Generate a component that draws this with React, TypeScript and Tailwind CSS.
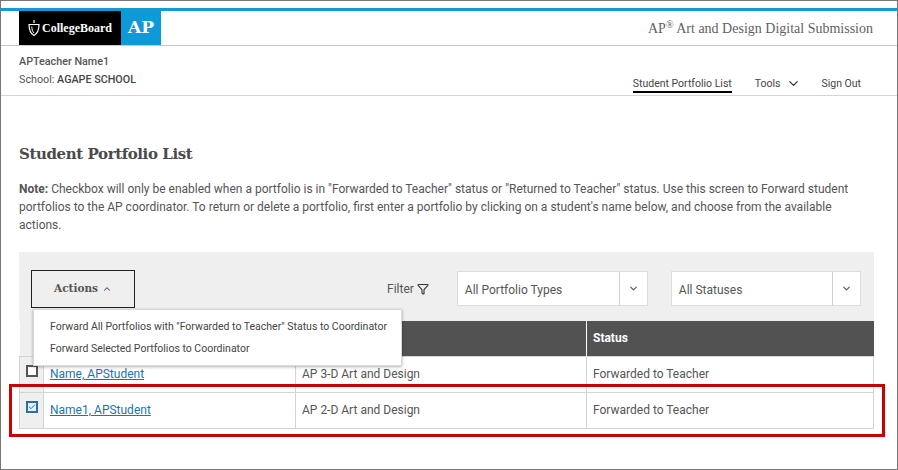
import React from 'react';
import { ChevronDown, ChevronUp, Check, Funnel } from 'lucide-react';

const slab = "font-['DejaVu_Serif','Liberation_Serif',serif]";

const rows = [
  { name: 'Name, APStudent', type: 'AP 3-D Art and Design', checked: false },
  { name: 'Name1, APStudent', type: 'AP 2-D Art and Design', checked: true },
];

function Select({ label, width }: { label: string; width: string }) {
  return (
    <div className={`flex h-[35px] ${width} border border-[#dcdcdc] bg-white text-[12px] text-[#555]`}>
      <div className="flex flex-1 items-center pl-[7px] pt-[3px]">{label}</div>
      <div className="flex w-7 items-center justify-center border-l border-[#d0d0d0]">
        <ChevronDown size={11} strokeWidth={2.5} className="text-[#555]" />
      </div>
    </div>
  );
}

export default function App() {
  return (
    <div className="relative h-[470px] w-[898px] overflow-hidden border border-[#777] bg-white pt-[7px] font-['Roboto',sans-serif] text-[#555]">
      <div className="h-[3px] bg-[#119ad4]" />

      <header className="flex h-[35px] items-start justify-between border-b border-[#c8c8c8] pl-[18px] pr-6">
        <div className="flex h-[34px]">
          <div className="flex w-[102px] items-center gap-[2px] bg-black pl-[9px] text-white">
            <svg width="12" height="16" viewBox="0 0 12 16" fill="none" stroke="white" strokeWidth="1.2">
              <path d="M6 0v3M1 4.500h10C11 10 9.500 13.500 6 15.500 2.500 13.500 1 10 1 4.500z" />
              <path d="M3.800 6.500c0 3 .8 5 2.200 6.500" strokeWidth="1" />
            </svg>
            <span className="font-['Liberation_Serif',serif] text-[12px] font-bold">CollegeBoard</span>
          </div>
          <div className={`flex w-10 items-center justify-center bg-[#0e9ad9] text-[17px] font-bold text-white ${slab}`}>AP</div>
        </div>
        <div className="mt-[7px] font-['Liberation_Serif',serif] text-[14px] text-[#5f5f5f]">
          AP<sup className="text-[10px]">®</sup> Art and Design Digital Submission
        </div>
      </header>

      <div className="flex h-[50px] justify-between border-b border-[#d5d5d5] pl-[18px] pr-[36px]">
        <div className="pt-[7px] text-[10.750px] leading-[18px]">
          <div className="font-medium text-[#555]">APTeacher Name1</div>
          <div>School: <span className="font-medium text-[#444]">AGAPE SCHOOL</span></div>
        </div>
        <nav className="flex items-start pt-[30px] text-[10.500px] text-[#444]">
          <span className="mr-[23px] h-[17px] border-b-2 border-black">Student Portfolio List</span>
          <span className="mr-[6px]">Tools</span>
          <ChevronDown size={15} className="mr-[20px] text-[#333]" />
          <span>Sign Out</span>
        </nav>
      </div>

      <main className="px-[18px]">
        <h1 className={`mt-[48px] text-[15px] font-bold leading-5 tracking-[-0.4px] text-[#4a4a4a] ${slab}`}>Student Portfolio List</h1>
        <p className="mt-[16px] w-[845px] text-[12px] leading-[18px] text-[#555]">
          <strong className="font-bold">Note:</strong> Checkbox will only be enabled when a portfolio is in "Forwarded to Teacher" status or "Returned to Teacher" status. Use this screen to Forward student portfolios to the AP coordinator. To return or delete a portfolio, first enter a portfolio by clicking on a student's name below, and choose from the available actions.
        </p>

        <div className="mt-[18px] flex h-[69px] w-[855px] items-start bg-[#efefef] pl-[12px] pt-[18px]">
          <button className={`flex h-[38px] w-[104px] items-center justify-center gap-1 border border-[#222] text-[10.500px] font-bold text-[#555] ${slab}`}>
            Actions <ChevronUp size={10} strokeWidth={2.5} />
          </button>
          <div className="ml-[252px] mt-[10px] flex items-center gap-[3px] text-[12px]">
            Filter <Funnel size={12} strokeWidth={2.2} className="text-[#333]" />
          </div>
          <div className="ml-[28px] flex gap-[23px] pt-px">
            <Select label="All Portfolio Types" width="w-[191px]" />
            <Select label="All Statuses" width="w-[190px]" />
          </div>
        </div>

        <table className="w-[855px] table-fixed border-collapse text-[12px]">
          <colgroup>
            <col className="w-[24px]" />
            <col className="w-[252px]" />
            <col className="w-[291px]" />
            <col />
          </colgroup>
          <thead>
            <tr className="h-[35px] bg-[#525252] text-left font-bold text-white">
              <th className="bg-[#efefef]" />
              <th />
              <th className="border-r border-white" />
              <th className="pl-[6px] font-bold">Status</th>
            </tr>
          </thead>
          <tbody>
            {rows.map(row => (
              <tr key={row.name} className="h-[36px]">
                <td className="border border-[#d4d4d4] bg-[#efefef] align-top">
                  <div className="ml-[6px] mt-[8px] flex h-[12px] w-[12px] items-center justify-center border-2 border-[#555] bg-white data-[on=true]:border-[#2e6da4] data-[on=true]:bg-[#e6f0f8]" data-on={row.checked}>
                    {row.checked && <Check size={10} strokeWidth={3} className="text-[#1c6aa8]" />}
                  </div>
                </td>
                <td className="border border-[#d4d4d4] pl-[6px]">
                  <a href="#" className="text-[#1b75ab] underline">{row.name}</a>
                </td>
                <td className="border border-[#d4d4d4] pl-[6px]">{row.type}</td>
                <td className="border border-[#d4d4d4] pl-[6px]">Forwarded to Teacher</td>
              </tr>
            ))}
          </tbody>
        </table>
      </main>

      {/* open Actions menu */}
      <div className="absolute left-[32px] top-[308px] h-[57px] w-[369px] whitespace-nowrap border border-[#d8d8d8] bg-white pl-4 pt-[6px] text-[10.500px] leading-[22px] text-[#444] shadow-[0_1px_3px_rgba(0,0,0,0.3)]">
        <div>Forward All Portfolios with "Forwarded to Teacher" Status to Coordinator</div>
        <div>Forward Selected Portfolios to Coordinator</div>
      </div>

      {/* annotation box */}
      <div className="absolute left-[8px] top-[383px] h-[53px] w-[876px] border-[3px] border-[#cc0000]" />
    </div>
  );
}
